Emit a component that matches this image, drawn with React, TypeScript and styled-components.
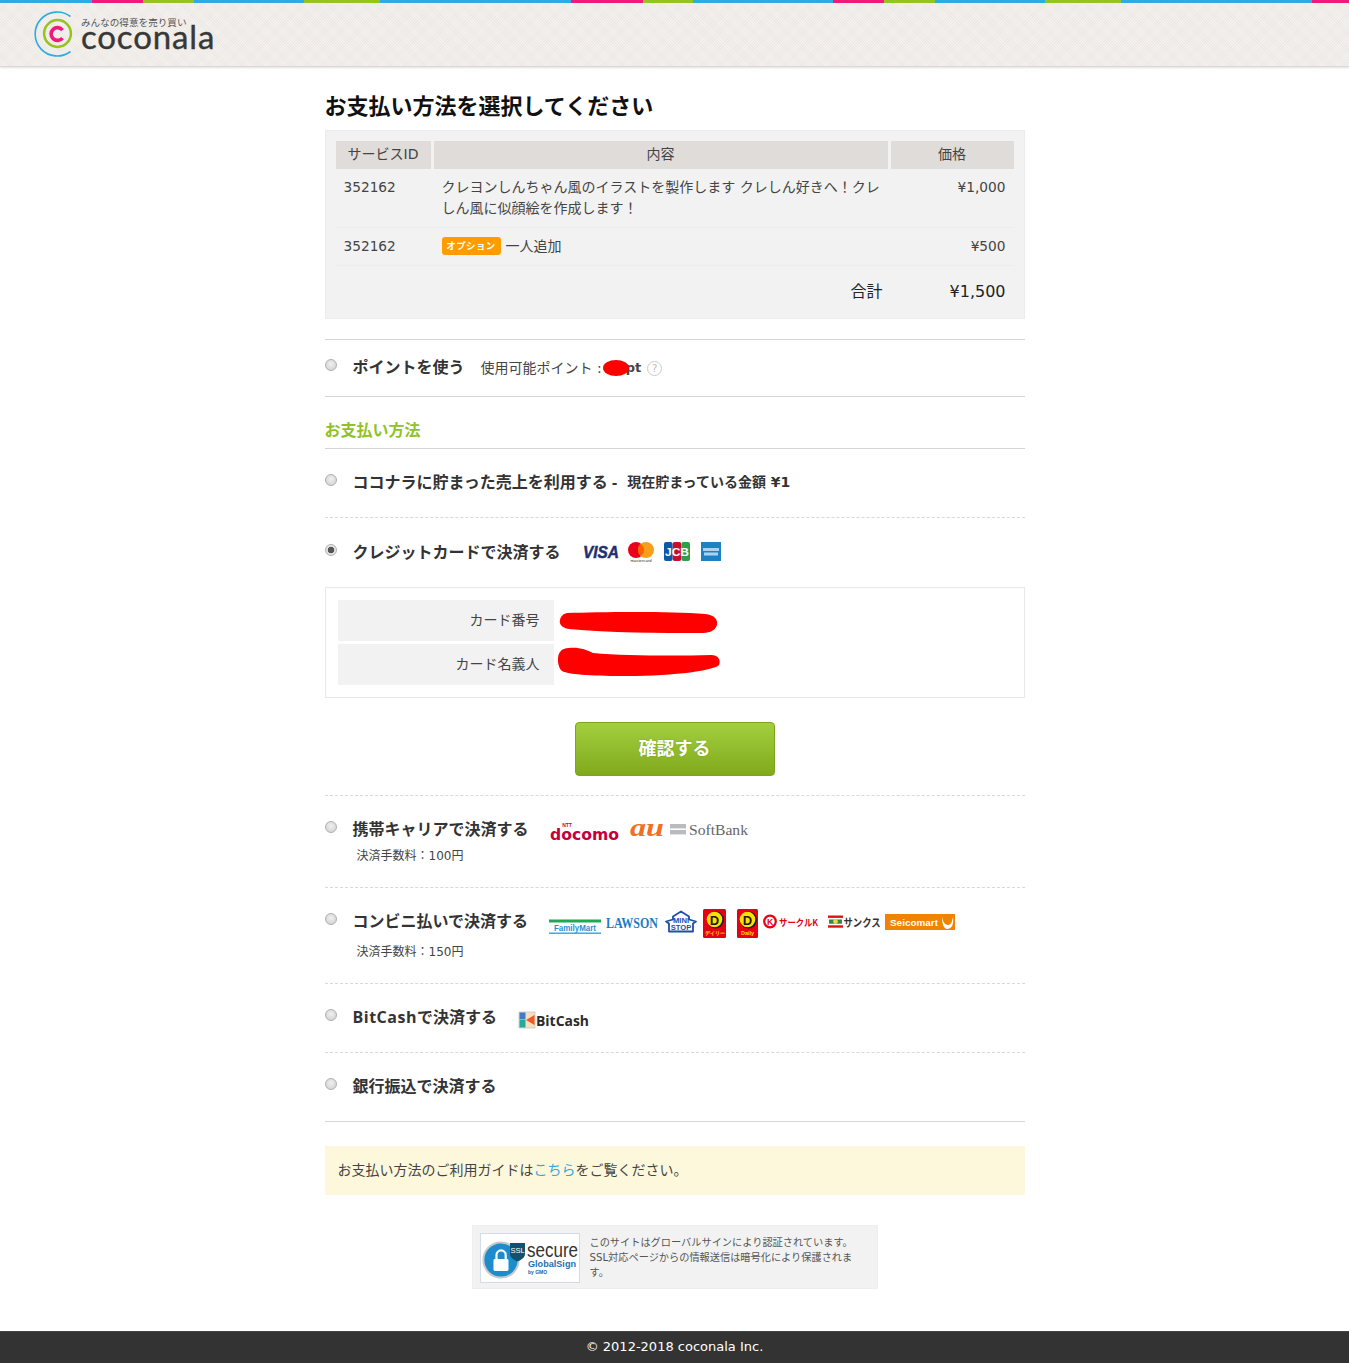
import React from "react";
import styled, { createGlobalStyle } from "styled-components";

const FONT = `"DejaVu Sans", "Noto Sans CJK JP", sans-serif`;

const Global = createGlobalStyle`
  html, body { margin: 0; padding: 0; background: #fff; }
  body { font-family: ${FONT}; color: #333; font-size: 14px; }
  svg { overflow: visible; display: block; flex: none; }
`;

const Page = styled.div`
  display: flex;
  flex-direction: column;
  min-height: 1363px;
`;

const stripeStops: [string, number][] = [
  ["#2dabe3", 92], ["#ee1a7c", 143], ["#96c31e", 194], ["#2dabe3", 304], ["#96c31e", 380],
  ["#2dabe3", 571], ["#ee1a7c", 643], ["#96c31e", 693], ["#2dabe3", 833], ["#ee1a7c", 884],
  ["#96c31e", 935], ["#2dabe3", 1045], ["#96c31e", 1121], ["#2dabe3", 1312], ["#ee1a7c", 1349],
];
const stripe = stripeStops
  .map(([c, end], i) => `${c} ${i ? stripeStops[i - 1][1] : 0}px ${end}px`)
  .join(", ");

const Header = styled.header`
  height: 67px;
  box-sizing: border-box;
  padding: 3px 0 0 35px;
  display: flex;
  align-items: flex-start;
  border-bottom: 1px solid #dad8d5;
  box-shadow: 0 1px 2px rgba(0, 0, 0, 0.12);
  background-color: #f0ece8;
  background-image:
    linear-gradient(90deg, ${stripe}),
    repeating-linear-gradient(45deg, rgba(255,255,255,.26) 0 1px, transparent 1px 2px),
    repeating-linear-gradient(-45deg, rgba(190,180,170,.08) 0 1px, transparent 1px 2px);
  background-size: 1349px 3px, auto, auto;
  background-repeat: no-repeat, repeat, repeat;
`;

const Brand = styled.div`
  display: flex;
  gap: 6px;
  margin-top: 8px;
`;

const BrandText = styled.div`
  display: flex;
  flex-direction: column;
`;

const Tagline = styled.span`
  font: 400 9.6px/12px "Noto Sans CJK JP", sans-serif;
  color: #555;
  margin-top: 5px;
`;

const Wordmark = styled.span`
  font: 400 33px/26px Lato, sans-serif;
  letter-spacing: 0.85px;
  margin-top: -5px;
  color: #383838;
  -webkit-text-stroke: 0.4px #383838;
`;

const Main = styled.main`
  width: 700px;
  margin: 0 auto;
  flex: 1;
`;

const Title = styled.h1`
  margin: 0;
  height: 63px;
  box-sizing: border-box;
  padding-top: 24px;
  font: 700 22px/32px ${FONT};
  color: #111;
`;

const Summary = styled.div`
  background: #f2f2f2;
  border: 1px solid #ececec;
  padding: 10px 10px 0;
  height: 189px;
  box-sizing: border-box;
`;

const Table = styled.table`
  width: 100%;
  border-collapse: separate;
  border-spacing: 0;
  table-layout: fixed;
`;

const Th = styled.th<{ $w: number }>`
  width: ${(p) => p.$w}px;
  height: 28px;
  padding: 0;
  vertical-align: top;
  background: #e0dcd9;
  background-clip: padding-box;
  border-left: 3px solid #f2f2f2;
  font: 400 14px/26px ${FONT};
  color: #444;
  &:first-child { border-left: 0; }
`;

const Td = styled.td<{ $right?: boolean; $h?: number; $line?: boolean; $big?: boolean; $pl?: number; $pr?: number }>`
  height: ${(p) => p.$h ?? 38}px;
  box-sizing: border-box;
  padding: ${(p) => (p.$big ? "7px" : "8px")} ${(p) => p.$pr ?? 8}px ${(p) => (p.$big ? "7px" : "6px")} ${(p) => p.$pl ?? 8}px;
  vertical-align: ${(p) => (p.$big ? "middle" : "top")};
  line-height: 21px;
  text-align: ${(p) => (p.$right ? "right" : "left")};
  color: ${(p) => (p.$big ? "#222" : "#444")};
  font-size: ${(p) => (p.$big ? 16 : 14)}px;
  border-bottom: ${(p) => (p.$line ? "1px solid #ececec" : "0")};
`;

const Num = styled.span`
  font-size: 13.7px;
`;

const OptionTag = styled.span`
  display: inline-block;
  background: #ff9d00;
  color: #fff;
  font-size: 9.5px;
  font-weight: 700;
  line-height: 18px;
  width: 59px;
  text-align: center;
  border-radius: 3px;
  margin-right: 5px;
  letter-spacing: 0.4px;
  vertical-align: 2px;
`;

const PointRow = styled.div`
  margin-top: 20px;
  height: 58px;
  box-sizing: border-box;
  border-top: 1px solid #d5d5d5;
  border-bottom: 1px solid #d5d5d5;
  display: flex;
  align-items: flex-start;
  padding-top: 15px;
`;

const Radio = styled.input.attrs({ type: "radio", readOnly: true })`
  appearance: none;
  width: 12px;
  height: 12px;
  margin: 4px 16px 0 0;
  flex: none;
  border-radius: 50%;
  border: 1px solid #b0b0b0;
  background: radial-gradient(circle at 50% 40%, #f0f0f0 0, #d4d4d4 80%);
  &:checked {
    background: radial-gradient(circle, #555 0 3px, #e4e4e4 3.6px);
  }
`;

const Label = styled.span`
  font: 700 16px/24px "Open Sans", "Noto Sans CJK JP", sans-serif;
  color: #333;
  white-space: nowrap;
`;

const LatinWide = styled.span`
  letter-spacing: 0.5px;
`;

const PointInfo = styled.span`
  position: relative;
  margin: 1px 0 0 16px;
  font-size: 14px;
  line-height: 24px;
  color: #444;
  display: flex;
  align-items: center;
`;

const PointUnit = styled.b`
  margin-left: 24px;
  font-size: 13px;
  color: #444;
`;

const Blot = styled.svg`
  position: absolute;
  left: 122px;
  top: 4px;
`;

const HelpMark = styled.span`
  margin-left: 6px;
  flex: none;
  width: 13px;
  height: 13px;
  border: 1px solid #ccc;
  border-radius: 50%;
  color: #bbb;
  font-size: 10px;
  line-height: 13px;
  text-align: center;
`;

const SectionHeading = styled.h2`
  margin: 0;
  height: 52px;
  box-sizing: border-box;
  padding-top: 22px;
  border-bottom: 1px solid #d5d5d5;
  font: 700 16px/24px ${FONT};
  color: #8fc31f;
`;

const Method = styled.section<{ $h?: number; $solid?: boolean; $top?: number }>`
  height: ${(p) => (p.$h ? `${p.$h}px` : "auto")};
  box-sizing: border-box;
  padding-top: ${(p) => p.$top ?? 21}px;
  border-bottom: 1px ${(p) => (p.$solid ? "solid #d5d5d5" : "dashed #d8d8d8")};
`;

const MethodHead = styled.div`
  display: flex;
  align-items: flex-start;
`;

const Note = styled.span`
  font-size: 14px;
  font-weight: 700;
  line-height: 24px;
  margin-left: 10px;
  color: #333;
`;

const Logos = styled.div<{ $left: number; $top?: number }>`
  display: flex;
  align-items: flex-start;
  margin-left: ${(p) => p.$left}px;
  margin-top: ${(p) => p.$top ?? 0}px;
`;

const Fee = styled.p`
  margin: 4px 0 0 32px;
  font-size: 12px;
  line-height: 20px;
  color: #444;
`;

const CardBox = styled.div`
  margin-top: 23px;
  height: 111px;
  box-sizing: border-box;
  border: 1px solid #e8e8e8;
  padding: 12px;
  display: grid;
  grid-template-columns: 216px 1fr;
  grid-auto-rows: 41px;
  row-gap: 3px;
`;

const CardLabel = styled.div`
  background: #f2f2f2;
  text-align: right;
  padding-right: 14px;
  font-size: 14px;
  line-height: 40px;
  color: #444;
`;

const CardValue = styled.div`
  display: flex;
  align-items: flex-start;
`;

const ScribbleMark = styled.svg<{ $left: number; $top: number }>`
  margin: ${(p) => p.$top}px 0 0 ${(p) => p.$left}px;
`;

const ConfirmWrap = styled.div`
  display: flex;
  justify-content: center;
  padding: 24px 0 19px;
`;

const Confirm = styled.button`
  width: 200px;
  height: 54px;
  border: 1px solid #7aa51c;
  border-radius: 4px;
  background: linear-gradient(#a3cf3f, #80aa1b);
  color: #fff;
  font: 700 18px/1 ${FONT};
  text-shadow: 0 0 2px rgba(0, 0, 0, 0.15);
`;

const Guide = styled.p`
  margin: 24px 0 0;
  height: 49px;
  padding: 0 13px;
  background: #fdf8dc;
  font-size: 14px;
  line-height: 49px;
  color: #444;
`;

const GuideLink = styled.a`
  color: #35a8d8;
  text-decoration: none;
`;

const SecureBox = styled.div`
  margin: 30px auto 0;
  width: 406px;
  height: 64px;
  box-sizing: border-box;
  background: #f2f2f2;
  border: 1px solid #eee;
  padding: 7px;
  display: flex;
  gap: 10px;
`;

const SecureSeal = styled.div`
  width: 100px;
  height: 50px;
  flex: none;
  box-sizing: border-box;
  background: #fff;
  border: 1px solid #d2dbe8;
`;

const SecureText = styled.p`
  margin: 2px 12px 0 0;
  font-size: 10.2px;
  line-height: 15px;
  color: #555;
`;

const Footer = styled.footer`
  margin-top: 42px;
  height: 32px;
  background: #333;
  border-top: 1px solid #444;
  box-sizing: border-box;
  color: #fff;
  text-align: center;
  font-size: 13px;
  line-height: 30px;
`;

const LogoMark = () => (
  <svg width="40" height="46" viewBox="0 0 40 46">
    <path d="M35.5 5.5 A22 22 0 1 0 35.5 40.5" fill="none" stroke="#2dabe3" strokeWidth="1.6" />
    <circle cx="22.5" cy="22.5" r="13.4" fill="none" stroke="#96c31e" strokeWidth="2.5" />
    <path d="M27.5 19 A6.4 6.4 0 1 0 27.5 27" fill="none" stroke="#ee1a7c" strokeWidth="3.6" />
  </svg>
);

const Visa = () => (
  <svg width="45" height="21" viewBox="0 0 45 21">
    <text x="0" y="17" fontFamily="Liberation Sans" fontWeight="700" fontStyle="italic" fontSize="17" fill="#1f2f6f" stroke="#1f2f6f" strokeWidth=".5" textLength="36" lengthAdjust="spacingAndGlyphs">VISA</text>
  </svg>
);

const Master = () => (
  <svg width="36" height="21" viewBox="0 0 36 21">
    <circle cx="8" cy="9" r="8" fill="#eb001b" />
    <circle cx="18" cy="9" r="8" fill="#f79e1b" />
    <path d="M13 2.8a8 8 0 0 1 0 12.4a8 8 0 0 1 0-12.4z" fill="#ff5f00" />
    <text x="13" y="20.5" textAnchor="middle" fontFamily="Liberation Sans" fontSize="4.2" fill="#333">mastercard</text>
  </svg>
);

const Jcb = () => (
  <svg width="37" height="21" viewBox="0 0 37 21">
    <rect x="0" y="1" width="8.6" height="19" rx="2" fill="#0b5aa8" />
    <rect x="8.7" y="1" width="8.6" height="19" rx="2" fill="#c8102e" />
    <rect x="17.4" y="1" width="8.6" height="19" rx="2" fill="#2f9e44" />
    <text x="13" y="14.5" textAnchor="middle" fontFamily="Liberation Sans" fontWeight="700" fontSize="11" fill="#fff" textLength="24" lengthAdjust="spacingAndGlyphs">JCB</text>
  </svg>
);

const Amex = () => (
  <svg width="20" height="21" viewBox="0 0 20 21">
    <rect y="1" width="20" height="19" fill="#1c82c4" />
    <rect x="2" y="7" width="16" height="3" fill="#a9d3ee" />
    <rect x="3" y="11.5" width="14" height="3" fill="#a9d3ee" />
  </svg>
);

const Docomo = () => (
  <svg width="80" height="25" viewBox="0 0 80 25">
    <text x="17" y="10" textAnchor="middle" fontFamily="Liberation Sans" fontWeight="700" fontSize="5" fill="#c4003c">NTT</text>
    <text x="0" y="23" fontFamily="DejaVu Sans" fontWeight="700" fontSize="15.5" fill="#c4003c" textLength="69" lengthAdjust="spacingAndGlyphs">docomo</text>
  </svg>
);

const Au = () => (
  <svg width="40" height="25" viewBox="0 0 40 25">
    <text x="0" y="19" fontFamily="Liberation Serif" fontStyle="italic" fontWeight="700" fontSize="25" fill="#f0701c" textLength="34" lengthAdjust="spacingAndGlyphs">au</text>
  </svg>
);

const SoftBank = () => (
  <svg width="80" height="25" viewBox="0 0 80 25">
    <rect x="0" y="7" width="16" height="4.4" fill="#b9bcbe" />
    <rect x="0" y="13" width="16" height="4.4" fill="#b9bcbe" />
    <text x="19" y="18" fontFamily="Liberation Serif" fontSize="15.2" fill="#666" textLength="59" lengthAdjust="spacingAndGlyphs">SoftBank</text>
  </svg>
);

const FamilyMart = () => (
  <svg width="57" height="29" viewBox="0 0 57 29">
    <g transform="translate(0 9.5)">
      <rect y="1" width="52" height="3" fill="#1fa850" />
      <text x="26" y="12.5" textAnchor="middle" fontFamily="Liberation Sans" fontWeight="700" fontSize="8.6" fill="#2d8fd0" textLength="42" lengthAdjust="spacingAndGlyphs">FamilyMart</text>
      <rect y="14" width="52" height="1.4" fill="#2da5e0" />
    </g>
  </svg>
);

const Lawson = () => (
  <svg width="59" height="29" viewBox="0 0 59 29">
    <text x="0" y="19" fontFamily="Liberation Serif" fontWeight="700" fontSize="14" fill="#1b7cc3" textLength="52" lengthAdjust="spacingAndGlyphs">LAWSON</text>
  </svg>
);

const MiniStop = () => (
  <svg width="38" height="29" viewBox="0 0 38 29">
    <g transform="translate(0 1.5)">
      <path d="M1 11 L8 9 L8 6 L16 1 L24 6 L24 9 L31 11 L28 13 V21 H4 V13 Z" fill="#fff" stroke="#1f4fa5" strokeWidth="1.8" strokeLinejoin="round" />
      <text x="16" y="12" textAnchor="middle" fontFamily="Liberation Sans" fontWeight="700" fontSize="7.6" fill="#1f4fa5">MINI</text>
      <text x="16" y="19.5" textAnchor="middle" fontFamily="Liberation Sans" fontWeight="700" fontSize="7.6" fill="#1f4fa5">STOP</text>
    </g>
  </svg>
);

const Daily = ({ w, box, caption }: { w: number; box: number; caption: string }) => (
  <svg width={w} height="29" viewBox={`0 0 ${w} 29`}>
    <rect width={box} height="29" rx="1.5" fill="#e60012" />
    <circle cx={box / 2 + 1} cy="11" r="8.4" fill="#1a1a1a" />
    <circle cx={box / 2} cy="10.5" r="7.8" fill="#ffe100" />
    <text x={box / 2} y="15.5" textAnchor="middle" fontFamily="Liberation Sans" fontWeight="700" fontSize="13" fill="#1a1a1a">D</text>
    <text x={box / 2} y="26" textAnchor="middle" fontFamily="Liberation Sans" fontWeight="700" fontSize="5.4" fill="#ffe100">{caption}</text>
  </svg>
);

const CircleK = () => (
  <svg width="65" height="29" viewBox="0 0 65 29">
    <g transform="translate(0 4.5)">
      <circle cx="7" cy="8" r="5.8" fill="#fff" stroke="#e60012" strokeWidth="2.2" />
      <text x="7" y="11.2" textAnchor="middle" fontFamily="Liberation Sans" fontWeight="700" fontSize="8.6" fill="#e60012">K</text>
      <text x="16" y="12" fontFamily="Noto Sans CJK JP" fontWeight="700" fontSize="9.5" fill="#e60012" textLength="39" lengthAdjust="spacingAndGlyphs">サークルK</text>
    </g>
  </svg>
);

const Sunkus = () => (
  <svg width="57" height="29" viewBox="0 0 57 29">
    <g transform="translate(0 4.5)">
      <rect x="0" y="2" width="15" height="2.4" fill="#d7141a" />
      <rect x="0" y="11.8" width="15" height="2.4" fill="#d7141a" />
      <rect x="1" y="6" width="13" height="4.2" fill="#2f8a43" />
      <circle cx="7.5" cy="8" r="2.4" fill="#f3d34a" />
      <text x="15.5" y="13" fontFamily="Noto Sans CJK JP" fontWeight="700" fontSize="11" fill="#333" textLength="37" lengthAdjust="spacingAndGlyphs">サンクス</text>
    </g>
  </svg>
);

const Seicomart = () => (
  <svg width="70" height="29" viewBox="0 0 70 29">
    <g transform="translate(0 5)">
      <rect width="70" height="16" fill="#f08300" />
      <text x="5" y="11.5" fontFamily="Liberation Sans" fontWeight="700" fontSize="9.5" fill="#fff" textLength="48" lengthAdjust="spacingAndGlyphs">Seicomart</text>
      <path d="M57 3c1 5 3 8 6 8c3 0 4-3 5-8c1 7-1 12-6 12c-3 0-5-5-5-12z" fill="#fff" />
    </g>
  </svg>
);

const BitCash = () => (
  <svg width="72" height="18" viewBox="0 0 72 18">
    <rect x="0" y="1" width="16" height="16" fill="#f7dfc0" stroke="#b9b9b9" strokeWidth=".6" />
    <rect x="0.5" y="1.5" width="6" height="7" fill="#3d7cc9" />
    <rect x="0.5" y="9" width="6" height="7.5" fill="#25a99a" />
    <path d="M7 9 L15.5 4 V14 Z" fill="#ef5a28" />
    <text x="17" y="14.5" fontFamily="Open Sans" fontWeight="700" fontSize="14.2" fill="#2b2b2b" textLength="53" lengthAdjust="spacingAndGlyphs">BitCash</text>
  </svg>
);

const Seal = () => (
  <svg width="98" height="48" viewBox="0 0 98 48">
    <circle cx="20" cy="26" r="17.6" fill="#1d8ccc" stroke="#c6c9cc" strokeWidth="2" />
    <rect x="12.5" y="25" width="15" height="12" rx="1.4" fill="#fff" />
    <path d="M15.5 25v-4a4.6 4.6 0 0 1 9.2 0v4" fill="none" stroke="#fff" strokeWidth="2.2" />
    <path d="M29 9 h15 v11 c0 3 -3 5.5 -7.5 7.5 c-4.5 -2 -7.5 -4.5 -7.5 -7.5z" fill="#12516f" />
    <text x="36.5" y="18.5" textAnchor="middle" fontFamily="Liberation Sans" fontSize="7.5" fill="#fff">SSL</text>
    <text x="46" y="23" fontFamily="Liberation Sans" fontSize="20" fill="#333" textLength="51" lengthAdjust="spacingAndGlyphs">secure</text>
    <text x="47" y="33" fontFamily="Liberation Sans" fontWeight="700" fontSize="8.6" fill="#1c6fb5" textLength="48" lengthAdjust="spacingAndGlyphs">GlobalSign</text>
    <text x="47" y="40" fontFamily="Liberation Sans" fontWeight="700" fontSize="5" fill="#1c5fa5">by GMO</text>
  </svg>
);

const Scribble = ({ variant }: { variant: "a" | "b" }) =>
  variant === "a" ? (
    <ScribbleMark $left={5} $top={11} width="160" height="24" viewBox="0 0 160 24">
      <path d="M8 2 C40 1 110 0 146 3 C156 4 159 9 158 14 C156 21 148 22 142 22 C100 22 50 22 10 18 C2 17 0 12 1 9 C2 5 4 3 8 2 Z" fill="#f00" />
    </ScribbleMark>
  ) : (
    <ScribbleMark $left={3} $top={3} width="164" height="30" viewBox="0 0 164 30">
      <path d="M12 1 C22 0 30 3 36 6 C70 9 120 9 154 8 C162 8 164 14 162 18 C158 23 120 29 70 29 C40 29 12 28 5 24 C0 20 0 8 3 5 C5 2 8 1 12 1 Z" fill="#f00" />
    </ScribbleMark>
  );

export default function App() {
  return (
    <>
      <Global />
      <Page>
        <Header>
          <Brand>
            <LogoMark />
            <BrandText>
              <Tagline>みんなの得意を売り買い</Tagline>
              <Wordmark>coconala</Wordmark>
            </BrandText>
          </Brand>
        </Header>
        <Main>
          <Title>お支払い方法を選択してください</Title>
          <Summary>
            <Table>
              <thead>
                <tr>
                  <Th $w={95}>サービスID</Th>
                  <Th $w={454}>内容</Th>
                  <Th $w={123}>価格</Th>
                </tr>
              </thead>
              <tbody>
                <tr>
                  <Td $line $h={59}><Num>352162</Num></Td>
                  <Td $line $h={59} $pl={11} $pr={6}>クレヨンしんちゃん風のイラストを製作します クレしん好きへ！クレしん風に似顔絵を作成します！</Td>
                  <Td $line $h={59} $right><Num>¥1,000</Num></Td>
                </tr>
                <tr>
                  <Td $line><Num>352162</Num></Td>
                  <Td $line $pl={11} $pr={6}><OptionTag>オプション</OptionTag>一人追加</Td>
                  <Td $line $right><Num>¥500</Num></Td>
                </tr>
                <tr>
                  <Td $h={51} />
                  <Td $h={51} $right $big $pr={5}>合計</Td>
                  <Td $h={51} $right $big>¥1,500</Td>
                </tr>
              </tbody>
            </Table>
          </Summary>

          <PointRow>
            <Radio name="point" />
            <Label>ポイントを使う</Label>
            <PointInfo>
              使用可能ポイント :
              <PointUnit>pt</PointUnit>
              <Blot width="26" height="16" viewBox="0 0 26 16">
                <ellipse cx="13" cy="8" rx="13" ry="8" fill="#f00" />
              </Blot>
              <HelpMark>?</HelpMark>
            </PointInfo>
          </PointRow>

          <SectionHeading>お支払い方法</SectionHeading>

          <Method $h={69}>
            <MethodHead>
              <Radio name="pay" />
              <Label>ココナラに貯まった売上を利用する - </Label>
              <Note>現在貯まっている金額 ¥1</Note>
            </MethodHead>
          </Method>

          <Method $top={22}>
            <MethodHead>
              <Radio name="pay" checked />
              <Label>クレジットカードで決済する</Label>
              <Logos $left={22} $top={1}>
                <Visa />
                <Master />
                <Jcb />
                <Amex />
              </Logos>
            </MethodHead>
            <CardBox>
              <CardLabel>カード番号</CardLabel>
              <CardValue><Scribble variant="a" /></CardValue>
              <CardLabel>カード名義人</CardLabel>
              <CardValue><Scribble variant="b" /></CardValue>
            </CardBox>
            <ConfirmWrap>
              <Confirm type="button">確認する</Confirm>
            </ConfirmWrap>
          </Method>

          <Method $h={92}>
            <MethodHead>
              <Radio name="pay" />
              <Label>携帯キャリアで決済する</Label>
              <Logos $left={21}>
                <Docomo />
                <Au />
                <SoftBank />
              </Logos>
            </MethodHead>
            <Fee>決済手数料：100円</Fee>
          </Method>

          <Method $h={96}>
            <MethodHead>
              <Radio name="pay" />
              <Label>コンビニ払いで決済する</Label>
              <Logos $left={21}>
                <FamilyMart />
                <Lawson />
                <MiniStop />
                <Daily w={34} box={23} caption="デイリー" />
                <Daily w={26} box={21} caption="Daily" />
                <CircleK />
                <Sunkus />
                <Seicomart />
              </Logos>
            </MethodHead>
            <Fee>決済手数料：150円</Fee>
          </Method>

          <Method $h={69}>
            <MethodHead>
              <Radio name="pay" />
              <Label><LatinWide>BitCash</LatinWide>で決済する</Label>
              <Logos $left={22} $top={6}>
                <BitCash />
              </Logos>
            </MethodHead>
          </Method>

          <Method $h={69} $solid>
            <MethodHead>
              <Radio name="pay" />
              <Label>銀行振込で決済する</Label>
            </MethodHead>
          </Method>

          <Guide>
            お支払い方法のご利用ガイドは<GuideLink href="#">こちら</GuideLink>をご覧ください。
          </Guide>

          <SecureBox>
            <SecureSeal><Seal /></SecureSeal>
            <SecureText>
              このサイトはグローバルサインにより認証されています。SSL対応ページからの情報送信は暗号化により保護されます。
            </SecureText>
          </SecureBox>
        </Main>
        <Footer>© 2012-2018 coconala Inc.</Footer>
      </Page>
    </>
  );
}
